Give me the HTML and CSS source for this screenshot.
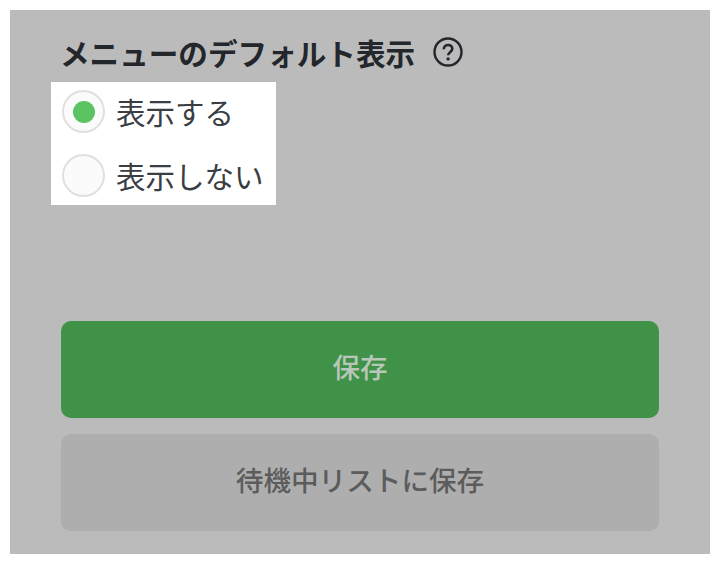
FILE: index.html
```html
<!DOCTYPE html>
<html lang="ja">
<head>
<meta charset="UTF-8">
<meta name="viewport" content="width=device-width, initial-scale=1.0">
<title>メニューのデフォルト表示</title>
<link rel="stylesheet" href="styles.css">
</head>
<body>

<div class="panel">
    <div class="heading">
        <span class="heading-text">メニューのデフォルト表示</span>
        <svg class="help" viewBox="0 0 30 30" aria-hidden="true">
            <circle cx="15" cy="15" r="13.5" fill="none" stroke="#23262b" stroke-width="2.4"/>
            <path d="M10.8 12.2c0-2.6 1.9-4.2 4.3-4.2s4.2 1.5 4.2 3.8c0 3.2-4.2 3.5-4.2 6.4" fill="none" stroke="#23262b" stroke-width="2.6"/>
            <circle cx="15.1" cy="21.9" r="1.7" fill="#23262b"/>
        </svg>
    </div>
    <div class="options">
        <div class="option">
            <span class="radio"><span class="radio-dot"></span></span>
            <span class="option-label">表示する</span>
        </div>
        <div class="option">
            <span class="radio"></span>
            <span class="option-label">表示しない</span>
        </div>
    </div>
    <div class="actions">
        <button class="btn btn-save">保存</button>
        <button class="btn btn-wait">待機中リストに保存</button>
    </div>
</div>

</body>
</html>
```

FILE: styles.css
```css
body {
    margin: 0;
    padding: 10px;
    height: 544px;
    background-color: #fff;
    font-family: "Noto Sans CJK JP", "Noto Sans", sans-serif;
}

.panel {
    display: flex;
    flex-direction: column;
    box-sizing: border-box;
    height: 544px;
    padding: 22px 51px 23px;
    background-color: #bbb;
}

.heading {
    display: flex;
    align-items: center;
    gap: 18px;
    height: 40px;
    margin-bottom: 10px;
}

.heading-text {
    margin-left: -1px;
    font-size: 29.6px;
    font-weight: 700;
    color: #23262b;
}

.help {
    width: 30px;
    height: 30px;
}

.options {
    display: flex;
    flex-direction: column;
    gap: 21px;
    align-self: flex-start;
    margin-left: -10px;
    padding: 8px 12px 8px 11px;
    background-color: #fff;
}

.option {
    display: flex;
    align-items: center;
    gap: 11px;
    height: 43px;
}

.radio {
    display: flex;
    justify-content: center;
    align-items: center;
    box-sizing: border-box;
    width: 43px;
    height: 43px;
    border: 2px solid #e0e0e0;
    border-radius: 50%;
    background-color: #fbfbfb;
}

.radio-dot {
    width: 22px;
    height: 22px;
    border-radius: 50%;
    background-color: #5ac463;
}

.option-label {
    padding-bottom: 2px;
    font-size: 29.5px;
    color: #3a3d42;
}

.actions {
    display: flex;
    flex-direction: column;
    gap: 16px;
    margin-top: auto;
}

.btn {
    height: 97px;
    padding: 0 0 8px;
    border: none;
    border-radius: 10px;
    font-family: inherit;
    font-size: 27.6px;
    font-weight: 500;
}

.btn-save {
    background-color: #3f9247;
    color: #b9c6ba;
}

.btn-wait {
    background-color: #aeaeae;
    color: #5c5c5c;
}
```
